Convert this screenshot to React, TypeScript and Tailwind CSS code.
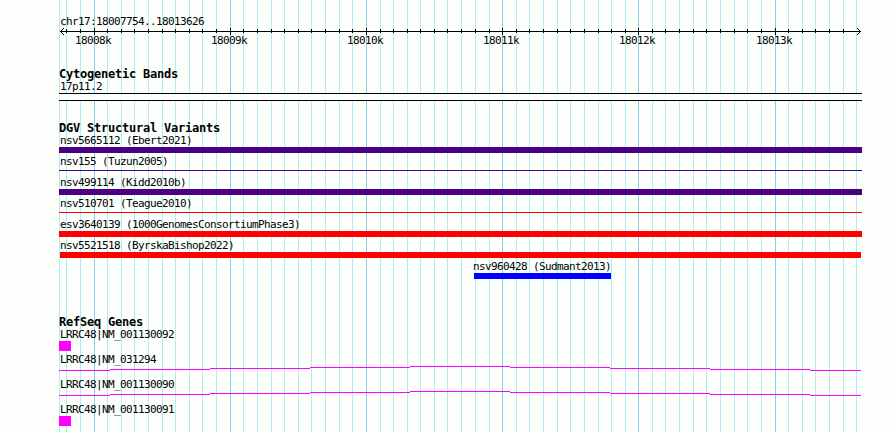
type Variant = {
  name: string;
  offset: string;
  glyph: string;
};

const gridLines = [
  59, 66, 80, 94, 107, 121, 134, 148, 162, 175, 189, 202, 216, 230, 243, 257, 271, 284, 298, 311,
  325, 339, 352, 366, 380, 393, 407, 420, 434, 447, 461, 475, 489, 502, 516, 529, 543, 557, 570,
  584, 598, 611, 625, 638, 652, 665, 679, 693, 706, 720, 734, 747, 761, 775, 788, 802, 815, 829,
  843, 856,
];

const majorLines = [94, 230, 366, 502, 638, 775];

const rulerLabels = ["18008k", "18009k", "18010k", "18011k", "18012k", "18013k"];

const variants: Variant[] = [
  { name: "nsv5665112 (Ebert2021)", offset: "ml-0", glyph: "w-[803px] h-1.5 bg-[#4b0082]" },
  { name: "nsv155 (Tuzun2005)", offset: "ml-0", glyph: "w-[803px] h-px mt-[2px] bg-[#4b0082]" },
  { name: "nsv499114 (Kidd2010b)", offset: "ml-0", glyph: "w-[803px] h-1.5 bg-[#4b0082]" },
  { name: "nsv510701 (Teague2010)", offset: "ml-0", glyph: "w-[803px] h-px mt-[2px] bg-[#ff0000]" },
  { name: "esv3640139 (1000GenomesConsortiumPhase3)", offset: "ml-0", glyph: "w-[803px] h-1.5 bg-[#ff0000]" },
  { name: "nsv5521518 (ByrskaBishop2022)", offset: "ml-0", glyph: "w-[801px] h-1.5 ml-px bg-[#ff0000]" },
  { name: "nsv960428 (Sudmant2013)", offset: "ml-[413px]", glyph: "w-[137px] h-1.5 ml-[2px] bg-[#0000ff]" },
];

const genes = [
  { name: "LRRC48|NM_001130092", exon: true },
  { name: "LRRC48|NM_031294", exon: false },
  { name: "LRRC48|NM_001130090", exon: false },
  { name: "LRRC48|NM_001130091", exon: true },
];

function Grid() {
  return (
    <svg className="absolute inset-0" width="890" height="432" shapeRendering="crispEdges">
      {gridLines.map((x) => (
        <rect key={x} x={x} y="0" width="1" height="432" fill={majorLines.includes(x) ? "#87ceeb" : "#afeeee"} />
      ))}
    </svg>
  );
}

function Ruler() {
  return (
    <svg className="block" width="890" height="7" shapeRendering="crispEdges">
      <rect x="60" y="3" width="801" height="1" />
      {gridLines.slice(1).map((x) =>
        majorLines.includes(x) ? (
          <rect key={x} x={x} y="0" width="1" height="7" />
        ) : x === 856 ? null : (
          <rect key={x} x={x} y="1" width="1" height="4" />
        )
      )}
      {[1, 2, 3].map((d) => (
        <g key={d}>
          <rect x={60 + d} y={3 - d} width="1" height="1" />
          <rect x={60 + d} y={3 + d} width="1" height="1" />
          <rect x={860 - d} y={3 - d} width="1" height="1" />
          <rect x={860 - d} y={3 + d} width="1" height="1" />
        </g>
      ))}
    </svg>
  );
}

// the intron is a very flat hat, so it steps one pixel at a time
function Intron() {
  const steps = [59, 110, 210, 310, 410, 510, 610, 710, 810, 861];
  return (
    <svg className="block" width="803" height="5" shapeRendering="crispEdges">
      {steps.slice(0, -1).map((x, i) => (
        <rect key={x} x={x - 59} y={Math.abs(4 - i)} width={steps[i + 1] - x} height="1" fill="#ff00ff" />
      ))}
    </svg>
  );
}

function Label({ children }: { children: string }) {
  return (
    <div className="h-[13px] pl-px text-[11px] leading-[13px] tracking-[-0.622px] whitespace-pre">{children}</div>
  );
}

function Heading({ children }: { children: string }) {
  return (
    <h2 className="h-3 text-[12px] leading-3 font-bold tracking-[-0.224px] whitespace-pre">{children}</h2>
  );
}

export default function App() {
  return (
    <div className="relative w-[890px] h-[432px] overflow-hidden bg-[#fdfffc] text-black font-['DejaVu_Sans_Mono',monospace]">
      <Grid />
      <div className="relative">
        <div className="pt-[15px] pl-[59px]">
          <Label>chr17:18007754..18013626</Label>
        </div>
        <Ruler />
        <div className="-mt-px flex gap-[100px] pl-[74px]">
          {rulerLabels.map((label) => (
            <div key={label} className="w-9 last:ml-px">
              <Label>{label}</Label>
            </div>
          ))}
        </div>

        <section className="mt-[21px] pl-[59px]">
          <Heading>Cytogenetic Bands</Heading>
          <Label>17p11.2</Label>
          <div className="w-[803px] h-2 border-y border-black bg-[#fdfffc]" />
        </section>

        <section className="mt-[21px] pl-[59px]">
          <Heading>DGV Structural Variants</Heading>
          {variants.map((v) => (
            <div key={v.name} className={`h-[21px] flex flex-col ${v.offset}`}>
              <Label>{v.name}</Label>
              <div className={v.glyph} />
            </div>
          ))}
        </section>

        <section className="mt-[35px] pl-[59px]">
          <Heading>RefSeq Genes</Heading>
          {genes.map((g) => (
            <div key={g.name} className="h-[25px]">
              <Label>{g.name}</Label>
              {g.exon ? <div className="w-3 h-2.5 bg-[#ff00ff]" /> : <Intron />}
            </div>
          ))}
        </section>
      </div>
    </div>
  );
}
